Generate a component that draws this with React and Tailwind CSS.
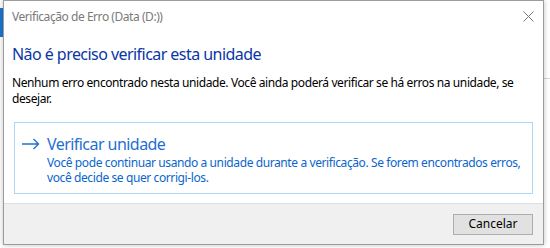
export default function App() {
  return (
    <div className="relative w-[550px] h-[248px] overflow-hidden bg-white pl-[3px] font-['Noto_Sans',sans-serif]">
      {/* window behind the dialog */}
      <div className="absolute left-0 top-[8px] w-[3px] h-[29px] bg-[#1a78d2]" />
      <div className="absolute right-0 top-[78px] w-[6px] h-[36px] border-t border-[#d6d6d6]" />

      <div className="relative flex flex-col w-[541px] h-[245px] border border-[#9c9c9c] bg-white shadow-[0_0_5px_rgba(0,0,0,0.25)]">
        <div className="flex h-[31px] items-center justify-between pl-[8px] pr-[9px]">
          <span className="text-[12px] tracking-[-0.45px] text-[#7a7a7a]">Verificação de Erro (Data (D:))</span>
          <svg width="11" height="11" viewBox="0 0 11 11" className="text-[#7a7a7a]">
            <path d="M0.5 0.5 L10.5 10.5 M10.5 0.5 L0.5 10.5" stroke="currentColor" strokeWidth="1" />
          </svg>
        </div>

        <div className="flex-1 px-[8px]">
          <h1 className="mt-[11px] text-[16px] leading-[22px] tracking-[-0.55px] text-[#0a37a6]">
            Não é preciso verificar esta unidade
          </h1>
          <p className="mt-[10px] text-[12px] leading-[16px] tracking-[-0.4px] text-black">
            Nenhum erro encontrado nesta unidade. Você ainda poderá verificar se há erros na unidade, se desejar.
          </p>
          <div className="mt-[15px] ml-[2px] mr-[2px] flex h-[72px] gap-[7px] border border-[#b0d6f4] pl-[7px] pt-[10px]">
            <svg width="18" height="12" viewBox="0 0 18 12" className="mt-[5px] shrink-0 text-[#1f72d6]">
              <path d="M0 6 H16.5 M11.5 1 L16.5 6 L11.5 11" fill="none" stroke="currentColor" strokeWidth="1.4" />
            </svg>
            <div className="text-[#0a66cc]">
              <div className="text-[16px] leading-[22px] tracking-[-0.55px] text-[#1f6fd2]">Verificar unidade</div>
              <div className="text-[12px] leading-[15px] tracking-[-0.4px]">
                Você pode continuar usando a unidade durante a verificação. Se forem encontrados erros, você decide se quer corrigi-los.
              </div>
            </div>
          </div>
        </div>

        <div className="flex h-[41px] items-center justify-end border-t border-[#dfdfdf] bg-[#f0f0f0] pr-[10px]">
          <button className="flex h-[21px] w-[80px] items-center justify-center border border-[#adadad] bg-[#e1e1e1] text-[12px] text-black">
            Cancelar
          </button>
        </div>
      </div>
    </div>
  );
}
